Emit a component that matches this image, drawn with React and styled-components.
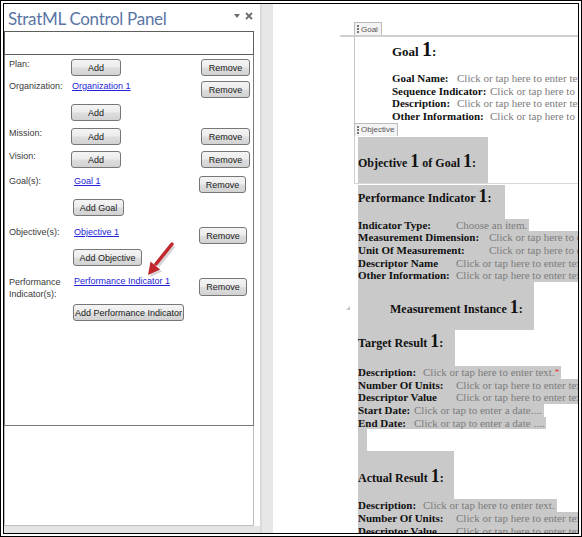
import styled, { createGlobalStyle } from 'styled-components';

const Global = createGlobalStyle`
    html, body {
        margin: 0;
        background: #ffffff;
    }
`;

const Frame = styled.div`
    position: relative;
    display: flex;
    width: 582px;
    height: 537px;
    box-sizing: border-box;
    border: 4px double #000;
    overflow: hidden;
    background: #fff;
`;

/* ---------- task pane ---------- */

const Panel = styled.div`
    position: relative;
    display: flex;
    flex-direction: column;
    width: 256px;
    flex-shrink: 0;
    font-family: "Liberation Sans", Arial, sans-serif;
`;

const PanelHead = styled.div`
    display: flex;
    align-items: center;
    justify-content: space-between;
    height: 27px;
    padding: 0 7px 0 4px;
`;

const Title = styled.div`
    font-family: Lato, "Liberation Sans", sans-serif;
    font-size: 17px;
    letter-spacing: -0.3px;
    color: #5a76a6;
    margin-top: 2px;
`;

const HeadIcons = styled.div`
    display: flex;
    align-items: center;
    gap: 5px;
    margin-top: -4px;
`;

const SearchBox = styled.div`
    height: 24px;
    margin-right: 6px;
    box-sizing: border-box;
    border: 1px solid #5e5e5e;
`;

const FormBox = styled.div`
    display: flex;
    flex-direction: column;
    height: 371px;
    margin-right: 6px;
    box-sizing: border-box;
    padding: 4px 3px 0 4px;
    border: 1px solid #7a7a7a;
    border-top: none;
`;

const LowerBox = styled.div`
    height: 100px;
    margin-right: 6px;
    box-sizing: border-box;
    border: 1px solid #bdbdbd;
    border-top: none;
`;

const PanelFoot = styled.div`
    flex: 1;
    background: #e4e4e4;
`;

const Row = styled.div`
    display: grid;
    grid-template-columns: 62px 1fr auto;
    align-items: start;
    margin-top: ${p => p.$mt}px;
`;

const Label = styled.div`
    font-size: 9px;
    line-height: ${p => p.$lh || 11}px;
    color: #3a3a3a;
`;

const Link = styled.a`
    justify-self: start;
    margin-left: ${p => p.$ml || 3}px;
    font-size: 9px;
    line-height: 11px;
    color: #2323d8;
    text-decoration: underline;
`;

const Btn = styled.button`
    justify-self: start;
    width: ${p => p.$w}px;
    height: ${p => p.$h || 17}px;
    margin: ${p => p.$mt || 0}px ${p => p.$mr || 0}px 0 ${p => p.$ml || 0}px;
    padding: 0;
    box-sizing: border-box;
    border: 1px solid #777;
    border-radius: 3px;
    background: linear-gradient(#f4f4f4, #ececec 48%, #dedede 52%, #d2d2d2);
    font-family: "Liberation Sans", Arial, sans-serif;
    font-size: 9px;
    color: #1a1a1a;
`;

const Arrow = styled.svg`
    position: absolute;
    left: 134px;
    top: 232px;
`;

/* ---------- document ---------- */

const Splitter = styled.div`
    width: 11px;
    flex-shrink: 0;
    background: #e7e7e7;
    border-left: 2px solid #dadada;
`;

const Doc = styled.div`
    flex: 1;
    min-width: 0;
    overflow: hidden;
    padding-top: 18px;
    font-family: "Liberation Serif", "Times New Roman", serif;
    color: #111;
`;

const Tag = styled.div`
    display: flex;
    align-items: center;
    gap: 2px;
    width: fit-content;
    height: 13px;
    box-sizing: border-box;
    margin-left: 81px;
    padding: 0 3px 0 2px;
    border: 1px solid #bcbcbc;
    border-bottom: none;
    background: #f3f3f3;
    font-family: "Liberation Sans", Arial, sans-serif;
    font-size: 8px;
    color: #555;
`;

const Grip = styled.span`
    width: 0;
    height: 8px;
    border-left: 2px dotted #777;
`;

const Rule = styled.div`
    margin-left: 67px;
    height: 2px;
    background: #d0d0d0;
`;

const GoalBox = styled.section`
    margin-left: 81px;
    padding-left: 37px;
    border-left: 1px solid #c6c6c6;
`;

const ObjBox = styled.section`
    margin-left: 81px;
    padding: 1px 0 0 3px;
    border-left: 1px solid #d0d0d0;
    border-bottom: 1px solid #d8d8d8;
`;

const Body = styled.div`
    margin-left: 85px;
    padding-top: 1px;
`;

const Heading = styled.div`
    position: relative;
    width: ${p => (p.$w ? `${p.$w}px` : 'auto')};
    height: ${p => p.$h}px;
    box-sizing: border-box;
    padding: ${p => p.$pt}px 0 0 ${p => p.$pl || 0}px;
    background: ${p => (p.$shade ? '#c9c9c9' : 'transparent')};
    font-size: ${p => p.$fs || 12}px;
    font-weight: bold;
    line-height: 20px;
    white-space: nowrap;
`;

const Num = styled.span`
    font-size: ${p => p.$fs || 18}px;
`;

const Corner = styled.span`
    position: absolute;
    left: -12px;
    top: 24px;
    width: 0;
    height: 0;
    border-left: 4px solid transparent;
    border-bottom: 4px solid #c4c4c4;
`;

const Line = styled.div`
    width: max-content;
    padding-right: 2px;
    background: ${p => (p.$shade ? '#c9c9c9' : 'transparent')};
    font-size: 11px;
    line-height: 12.65px;
    white-space: nowrap;
`;

const Key = styled.span`
    display: inline-block;
    min-width: ${p => p.$w}px;
    font-weight: bold;
`;

const Hint = styled.span`
    color: #7c7c7c;
`;

const Mark = styled.span`
    color: #e0302f;
    font-size: 9px;
    vertical-align: 1px;
`;

const Spacer = styled.div`
    width: ${p => p.$w}px;
    height: ${p => p.$h}px;
    background: #c9c9c9;
`;

const TEXT = 'Click or tap here to enter text.';
const DATE = 'Click or tap to enter a date....';

const Field = ({ k, w, v = TEXT, shade, mark }) => (
    <Line $shade={shade}>
        <Key $w={w}>{k}</Key>
        <Hint>{v}</Hint>
        {mark && <Mark>*</Mark>}
    </Line>
);

const App = () => {
    return (
        <>
            <Global />
            <Frame>
                <Panel>
                    <PanelHead>
                        <Title>StratML Control Panel</Title>
                        <HeadIcons>
                            <svg width="6" height="4" viewBox="0 0 6 4">
                                <path d="M0 0 H6 L3 4 Z" fill="#6d6d6d" />
                            </svg>
                            <svg width="8" height="8" viewBox="0 0 8 8">
                                <path d="M1 1 L7 7 M7 1 L1 7" stroke="#6d6d6d" strokeWidth="1.8" />
                            </svg>
                        </HeadIcons>
                    </PanelHead>
                    <SearchBox />
                    <FormBox>
                        <Row $mt={0}>
                            <Label>Plan:</Label>
                            <Btn $w={50}>Add</Btn>
                            <Btn $w={49}>Remove</Btn>
                        </Row>
                        <Row $mt={5}>
                            <Label>Organization:</Label>
                            <Link $ml={1}>Organization 1</Link>
                            <Btn $w={49}>Remove</Btn>
                        </Row>
                        <Row $mt={6}>
                            <span />
                            <Btn $w={50}>Add</Btn>
                        </Row>
                        <Row $mt={7}>
                            <Label>Mission:</Label>
                            <Btn $w={50}>Add</Btn>
                            <Btn $w={49}>Remove</Btn>
                        </Row>
                        <Row $mt={6}>
                            <Label>Vision:</Label>
                            <Btn $w={50}>Add</Btn>
                            <Btn $w={49}>Remove</Btn>
                        </Row>
                        <Row $mt={8}>
                            <Label>Goal(s):</Label>
                            <Link>Goal 1</Link>
                            <Btn $w={47} $mr={4}>Remove</Btn>
                        </Row>
                        <Row $mt={6}>
                            <span />
                            <Btn $w={51} $ml={2}>Add Goal</Btn>
                        </Row>
                        <Row $mt={11}>
                            <Label>Objective(s):</Label>
                            <Link>Objective 1</Link>
                            <Btn $w={48} $mr={3}>Remove</Btn>
                        </Row>
                        <Row $mt={5}>
                            <span />
                            <Btn $w={69} $ml={2}>Add Objective</Btn>
                        </Row>
                        <Row $mt={10}>
                            <Label $lh={12}>Performance<br />Indicator(s):</Label>
                            <Link>Performance Indicator 1</Link>
                            <Btn $w={48} $h={18} $mt={2} $mr={3}>Remove</Btn>
                        </Row>
                        <Row $mt={4}>
                            <span />
                            <Btn $w={111} $ml={2}>Add Performance Indicator</Btn>
                        </Row>
                    </FormBox>
                    <LowerBox />
                    <PanelFoot />

                    {/* red callout pointing at the new indicator link */}
                    <Arrow width="40" height="42" viewBox="-4 -4 40 42">
                        <g transform="translate(2 2)" opacity="0.35">
                            <path d="M30 4 L14 24" stroke="#888" strokeWidth="3.5" />
                            <path d="M6 35 L18 29.5 L8.5 21.5 Z" fill="#888" />
                        </g>
                        <path d="M30 4 L14 24" stroke="#c1272d" strokeWidth="3.5" strokeLinecap="round" />
                        <path d="M6 35 L18 29.5 L8.5 21.5 Z" fill="#c1272d" />
                    </Arrow>
                </Panel>

                <Splitter />

                <Doc>
                    <Tag><Grip />Goal</Tag>
                    <Rule />
                    <GoalBox>
                        <Heading $h={35} $pt={2} $fs={13}>
                            Goal <Num $fs={20}>1</Num>:
                        </Heading>
                        <Field k="Goal Name:" w={65} />
                        <Field k="Sequence Indicator:" w={98} />
                        <Field k="Description:" w={65} />
                        <Field k="Other Information:" w={98} />
                    </GoalBox>

                    <Tag><Grip />Objective</Tag>
                    <ObjBox>
                        <Heading $shade $w={130} $h={46} $pt={14}>
                            Objective <Num>1</Num> of Goal <Num>1</Num>:
                        </Heading>
                    </ObjBox>

                    <Body>
                        <Heading $shade $w={147} $h={34} $pt={1}>
                            Performance Indicator <Num>1</Num>:
                        </Heading>
                        <Field shade k="Indicator Type:" w={98} v="Choose an item." />
                        <Field shade k="Measurement Dimension:" w={131} />
                        <Field shade k="Unit Of Measurement:" w={131} />
                        <Field shade k="Descriptor Name" w={98} />
                        <Field shade k="Other Information:" w={98} />

                        <Heading $shade $w={176} $h={48} $pt={15} $pl={32}>
                            <Corner />
                            Measurement Instance <Num>1</Num>:
                        </Heading>
                        <Heading $shade $w={97} $h={36} $pt={1}>
                            Target Result <Num>1</Num>:
                        </Heading>
                        <Field shade k="Description:" w={65} mark />
                        <Field shade k="Number Of Units:" w={98} />
                        <Field shade k="Descriptor Value" w={98} />
                        <Field shade k="Start Date:" w={56} v={DATE} />
                        <Field shade k="End Date:" w={56} v="Click or tap to enter a date ...." />
                        <Spacer $w={9} $h={22} />

                        <Heading $shade $w={96} $h={48} $pt={15}>
                            Actual Result <Num>1</Num>:
                        </Heading>
                        <Field shade k="Description:" w={65} />
                        <Field shade k="Number Of Units:" w={98} />
                        <Field shade k="Descriptor Value" w={98} />
                    </Body>
                </Doc>
            </Frame>
        </>
    );
};

export default App;
